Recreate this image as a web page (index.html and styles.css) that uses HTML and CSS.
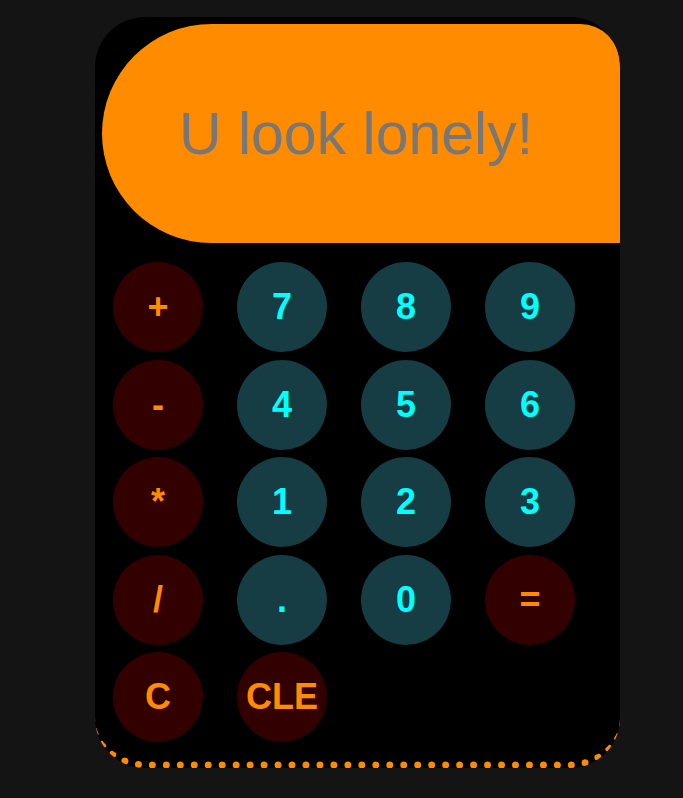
FILE: index.html
```html
<!DOCTYPE html>
<html>
<head>
<meta charset="utf-8">
<link rel="stylesheet" href="styles.css">
</head>
<body>
<div class="calc">
  <div class="display">U look lonely!</div>
  <div class="keys">
    <button class="key op">+</button>
    <button class="key num">7</button>
    <button class="key num">8</button>
    <button class="key num">9</button>
    <button class="key op">-</button>
    <button class="key num">4</button>
    <button class="key num">5</button>
    <button class="key num">6</button>
    <button class="key op">*</button>
    <button class="key num">1</button>
    <button class="key num">2</button>
    <button class="key num">3</button>
    <button class="key op">/</button>
    <button class="key num">.</button>
    <button class="key num">0</button>
    <button class="key op">=</button>
    <button class="key op">C</button>
    <button class="key op">CLE</button>
  </div>
</div>
</body>
</html>
```

FILE: styles.css
```css
html, body {
  margin: 0;
  background: #141414;
}
body {
  padding: 17px 0 0 95px;
  font-family: "Liberation Sans", Arial, sans-serif;
}
.calc {
  width: 525px;
  height: 744px;
  box-sizing: content-box;
  background: #000;
  border-radius: 50px;
  border-bottom: 7px dotted #ff8c00;
  overflow: hidden;
}
.display {
  margin: 7px 0 0 7px;
  width: 518px;
  height: 219px;
  box-sizing: border-box;
  padding-right: 10px;
  background: #ff8c00;
  border-radius: 110px 40px 0 110px;
  color: #777;
  font-size: 59px;
  display: flex;
  align-items: center;
  justify-content: center;
}
.keys {
  margin: 19px 0 0 18px;
  display: grid;
  grid-template-columns: repeat(4, 90px);
  column-gap: 34px;
  row-gap: 7.5px;
}
.key {
  width: 90px;
  height: 90px;
  border: none;
  border-radius: 50%;
  padding: 0;
  font-family: "Liberation Sans", Arial, sans-serif;
  font-weight: bold;
  font-size: 36px;
  display: flex;
  align-items: center;
  justify-content: center;
}
.op {
  background: #330000;
  color: #ff8c00;
}
.num {
  background: #163c44;
  color: #00ffff;
}
```
